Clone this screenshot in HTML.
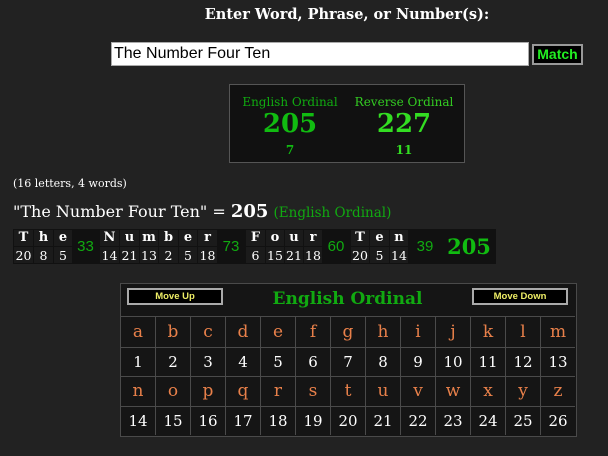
<!DOCTYPE html>
<html><head><style>
body{margin:0;width:608px;height:456px;background:#222;overflow:hidden;font-family:"DejaVu Serif","Liberation Serif",serif;position:relative}
.a{position:absolute}
</style></head><body>
<div class="a" style="left:0;width:694px;top:6px;text-align:center;color:#fff;font-weight:bold;font-size:14.5px;font-family:'DejaVu Serif',serif">Enter Word, Phrase, or Number(s):</div>
<div class="a" style="left:111px;top:42px;width:414px;height:22px;background:#fff;border:1px solid #aaa;font-family:'Liberation Sans',sans-serif;font-size:16px;line-height:22px;color:#000;padding-left:2px">The Number Four Ten</div>
<div class="a" style="left:532px;top:44px;width:47px;height:17px;background:#000;border:2px solid #999;color:#2e2;font-family:'Liberation Sans',sans-serif;font-weight:bold;font-size:14px;line-height:17px;text-align:center">Match</div>
<div class="a" style="left:229px;top:84px;width:234px;height:77px;background:#111;border:1px solid #555"></div>
<div class="a" style="left:232px;top:95px;width:116px;text-align:center;color:#1a1;font-size:12px">English Ordinal</div>
<div class="a" style="left:346px;top:95px;width:116px;text-align:center;color:#3c2;font-size:12px">Reverse Ordinal</div>
<div class="a" style="left:232px;top:109px;width:116px;text-align:center;color:#1b1;font-size:26px;font-weight:bold">205</div>
<div class="a" style="left:346px;top:109px;width:116px;text-align:center;color:#3d2;font-size:26px;font-weight:bold">227</div>
<div class="a" style="left:232px;top:143px;width:116px;text-align:center;color:#1b1;font-size:12px;font-weight:bold">7</div>
<div class="a" style="left:346px;top:143px;width:116px;text-align:center;color:#3d2;font-size:12px;font-weight:bold">11</div>
<div class="a" style="left:13px;top:177px;color:#fff;font-size:11px">(16 letters, 4 words)</div>
<div class="a" style="left:13px;top:201px;color:#fff;font-size:16px;white-space:nowrap">"The Number Four Ten" = <b style="font-size:18px">205</b> <span style="color:#1a1;font-size:13.5px">(English Ordinal)</span></div>
<div class="a" style="left:13px;top:229px;width:483px;height:35px;background:#111"></div>
<div id="cr"></div>
<div class="a" style="left:120px;top:283px;width:455px;height:152px;background:#151515;border:1px solid #4a4a4a"></div>
<div class="a" style="left:127px;top:288px;width:92px;height:13px;background:#000;border:2px solid #aaa;color:#ee6;font-family:'Liberation Sans',sans-serif;font-weight:bold;font-size:9.5px;line-height:13px;text-align:center">Move Up</div>
<div class="a" style="left:472px;top:288px;width:92px;height:13px;background:#000;border:2px solid #aaa;color:#ee6;font-family:'Liberation Sans',sans-serif;font-weight:bold;font-size:9.5px;line-height:13px;text-align:center">Move Down</div>
<div class="a" style="left:120px;width:455px;top:289px;text-align:center;color:#1a1;font-size:17px;font-weight:bold">English Ordinal</div>
<div id="g"></div>
<script>
var cr=document.getElementById('cr'),h='';
var items=[['T',20],['h',8],['e',5],[33],['N',14],['u',21],['m',13],['b',2],['e',5],['r',18],[73],['F',6],['o',15],['u',21],['r',18],[60],['T',20],['e',5],['n',14],[39]];
var xs=[13,33,53,72,99,119,139,158,178,197,217,245,265,284,303,322,350,369,389,408,442];
for(var i=0;i<items.length;i++){var x=xs[i],w=xs[i+1]-x,it=items[i];
if(it.length==2){h+='<div class="a" style="left:'+(x+1)+'px;top:230px;width:'+(w-1)+'px;height:16px;background:#1b1b1b;color:#fff;font-size:13px;font-weight:bold;text-align:center;line-height:16px">'+it[0]+'</div><div class="a" style="left:'+(x+1)+'px;top:247px;width:'+(w-1)+'px;height:16px;background:#1b1b1b;color:#fff;font-size:12.5px;text-align:center;line-height:17px">'+it[1]+'</div>';}
else h+='<div class="a" style="left:'+x+'px;top:229px;width:'+w+'px;height:35px;color:#1a1;font-size:15px;text-align:center;line-height:35px;font-family:\'Liberation Sans\',sans-serif">'+it[0]+'</div>';}
h+='<div class="a" style="left:442px;top:229px;width:54px;height:35px;color:#1b1;font-size:21px;font-weight:bold;text-align:center;line-height:35px">205</div>';
cr.innerHTML=h;
var g='',L='abcdefghijklmnopqrstuvwxyz',ys=[316,347,376,406,435];
for(var r=0;r<4;r++)for(var c=0;c<13;c++){var n=(r>>1)*13+c,x=120+c*35,y=ys[r],hh=ys[r+1]-y;
var t=r%2==0?L[n]:(n+1),col=r%2==0?'#e8804a':'#fff';
g+='<div class="a" style="left:'+x+'px;top:'+y+'px;width:34px;height:'+(hh-1)+'px;border-left:1px solid #4a4a4a;border-top:1px solid #4a4a4a;color:'+col+';font-size:'+(r%2==0?17:15)+'px;text-align:center;line-height:'+(hh-1)+'px">'+t+'</div>';}
document.getElementById('g').innerHTML=g;
</script>
</body></html>
